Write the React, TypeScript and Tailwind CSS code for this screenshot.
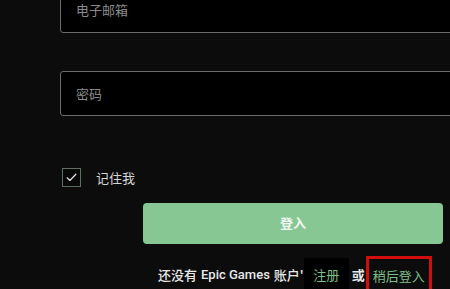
const FONT = { fontFamily: '"Noto Sans CJK SC", "Noto Sans", sans-serif' };

export default function App() {
  return (
    <div className="h-[289px] w-[450px] overflow-hidden bg-[#0c0c0c] text-[13px]" style={FONT}>
      <div className="pl-[60px]">
        <div className="-mt-[12px] flex h-[45px] w-[420px] items-center rounded-[3px] border border-[#6b6b6b] bg-black pl-[15px] text-[#8c8c8c]">
          <span className="-mt-[2px]">电子邮箱</span>
        </div>
        <div className="mt-[38px] flex h-[45px] w-[420px] items-center rounded-[3px] border border-[#6b6b6b] bg-black pl-[15px] text-[#8c8c8c]">
          密码
        </div>
        <div className="mt-[52px] flex items-center">
          <div className="ml-[2px] flex h-[19px] w-[19px] items-center justify-center border border-[#5f6f5f] bg-[#080808]">
            <svg width="13" height="13" viewBox="0 0 24 24" fill="none" stroke="#e6e6e6" strokeWidth="2.2" strokeLinecap="round" strokeLinejoin="round">
              <path d="M4 12.5l5 5L20 6" />
            </svg>
          </div>
          <span className="ml-[15px] text-[#d6d6d6]">记住我</span>
        </div>
      </div>
      <div className="ml-[143px] mt-[15px] flex h-[41px] w-[300px] items-center justify-center rounded-[4px] bg-[#86c793] font-bold text-[#f2f7f2]">
        登入
      </div>
      <div className="mt-[12px] flex h-[33px] items-stretch pl-[158px] text-[#e8e8e8]">
        <span className="flex items-center pt-[6px] font-medium">还没有 <span className="mx-[4px]" style={{ fontFamily: 'Roboto, sans-serif' }}>Epic Games</span> 账户'</span>
        <span className="mt-[2px] flex w-[45px] items-center justify-center bg-black pt-[4px] text-[#7fbf8a]">注册</span>
        <span className="ml-[3px] flex items-center pt-[6px] font-bold">或</span>
        <span className="ml-[1px] flex w-[66px] items-center justify-center border-[3px] border-b-0 border-[#d10d0d] pt-[4px] text-[#7fbf8a]">稍后登入</span>
      </div>
    </div>
  );
}
